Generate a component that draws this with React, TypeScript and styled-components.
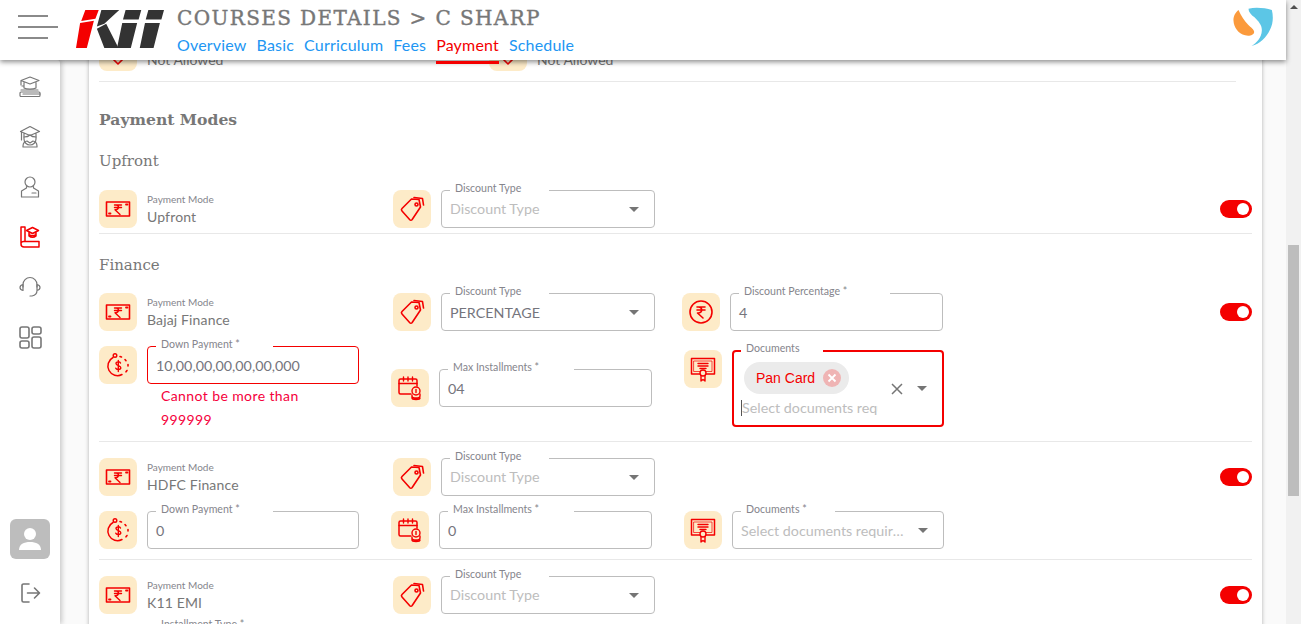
import { ReactNode } from 'react';
import styled, { createGlobalStyle } from 'styled-components';

const RED = '#f40000';
const GREY = '#777777';

const GlobalStyle = createGlobalStyle`
  html, body {
    margin: 0;
    padding: 0;
    height: 100%;
    overflow: hidden;
    background: #fafafa;
    font-family: 'Lato', 'Liberation Sans', sans-serif;
    color: ${GREY};
  }
  * { box-sizing: border-box; }
`;

const Shell = styled.div`
  display: flex;
  width: 1301px;
  height: 624px;
  overflow: hidden;
`;

const Column = styled.div`
  flex: 1;
  min-width: 0;
  display: flex;
  flex-direction: column;
`;

const Header = styled.header`
  position: relative;
  z-index: 3;
  flex: 0 0 60px;
  display: flex;
  align-items: flex-start;
  background: #fff;
  box-shadow: 0 2px 5px rgba(0, 0, 0, 0.45);
`;

const Burger = styled.div`
  flex: 0 0 52px;
  margin: 15px 0 0 18px;
  display: flex;
  flex-direction: column;
  gap: 9px;
`;

const BurgerLine = styled.span<{ $w: number }>`
  display: block;
  height: 2px;
  width: ${(p) => p.$w}px;
  background: #8a8a8a;
`;

const LogoBox = styled.svg`
  flex: 0 0 88px;
  margin: 10px 0 0 6px;
`;

const Heading = styled.div`
  margin-left: 13px;
  flex: 1;
`;

const PageTitle = styled.h1`
  margin: 6px 0 0;
  font-family: 'DejaVu Serif', serif;
  font-weight: 400;
  font-size: 20px;
  line-height: 24px;
  letter-spacing: 1.38px;
  -webkit-text-stroke: 0.4px ${GREY};
  color: ${GREY};
  white-space: nowrap;
`;

const Tabs = styled.nav`
  display: flex;
  gap: 10px;
  margin-top: 5px;
`;

const Tab = styled.a<{ $active?: boolean }>`
  position: relative;
  font-family: 'Lato', sans-serif;
  font-size: 16px;
  line-height: 20px;
  letter-spacing: 0.18px;
  color: ${(p) => (p.$active ? RED : '#2196f3')};
  &::after {
    content: '';
    display: ${(p) => (p.$active ? 'block' : 'none')};
    position: absolute;
    left: 0;
    right: 0;
    top: 26px;
    height: 3px;
    background: ${RED};
  }
`;

const Body = styled.div`
  flex: 1;
  min-height: 0;
  display: flex;
`;

const Sidebar = styled.aside`
  position: relative;
  z-index: 2;
  flex: 0 0 60px;
  display: flex;
  flex-direction: column;
  justify-content: space-between;
  align-items: center;
  padding: 2px 0 19px;
  background: #fff;
  box-shadow: 2px 0 5px rgba(0, 0, 0, 0.2);
  border-top-right-radius: 3px;
`;

const NavList = styled.div`
  display: flex;
  flex-direction: column;
  gap: 26px;
  padding-top: 13px;
`;

const NavIcon = styled.svg<{ $active?: boolean; $bold?: boolean }>`
  display: block;
  width: 24px;
  height: 24px;
  fill: none;
  stroke: ${(p) => (p.$active ? RED : GREY)};
  stroke-width: ${(p) => (p.$bold ? 1.6 : 1.2)};
  stroke-linejoin: round;
  stroke-linecap: round;
`;

const SideBottom = styled.div`
  display: flex;
  flex-direction: column;
  align-items: center;
  gap: 22px;
`;

const Avatar = styled.div`
  width: 40px;
  height: 40px;
  border-radius: 6px;
  background: #bdbdbd;
  display: flex;
  align-items: center;
  justify-content: center;
`;

const Main = styled.main`
  flex: 1;
  min-width: 0;
  padding: 0 24px 0 29px;
  background: #fafafa;
  overflow: hidden;
`;

const Card = styled.section`
  margin-top: -27px;
  padding: 0 10px;
  min-height: 700px;
  background: #fff;
  box-shadow: 0 0 4px rgba(0, 0, 0, 0.3);
`;

const TopRow = styled.div`
  display: flex;
  height: 49px;
  margin-right: 16px;
  padding-bottom: 10px;
  border-bottom: 1px solid #e8e8e8;
`;

const TopCell = styled.div`
  display: flex;
  gap: 10px;
  width: 390px;
`;

const TopValue = styled.span`
  margin-top: 18px;
  font-size: 14px;
  line-height: 17px;
`;

const SectionTitle = styled.h2`
  margin: 27px 0 0;
  font-family: 'DejaVu Serif', serif;
  font-size: 15.6px;
  line-height: 22px;
  font-weight: 700;
  color: ${GREY};
`;

const GroupTitle = styled.h3<{ $top: number }>`
  margin: ${(p) => p.$top}px 0 0;
  font-family: 'DejaVu Serif', serif;
  font-size: 15px;
  line-height: 20px;
  font-weight: 400;
  color: ${GREY};
`;

const FormRow = styled.div<{ $top: number; $pad?: number; $line?: boolean }>`
  display: grid;
  grid-template-columns: 294px 289px 1fr 32px;
  align-items: center;
  margin-top: ${(p) => p.$top}px;
  padding-bottom: ${(p) => p.$pad ?? 0}px;
  border-bottom: ${(p) => (p.$line ? '1px solid #e8e8e8' : 'none')};
`;

const Cell = styled.div<{ $shift?: number; $lift?: number }>`
  display: flex;
  align-items: flex-start;
  gap: 10px;
  margin-left: ${(p) => p.$shift ?? 0}px;
  margin-bottom: ${(p) => p.$lift ?? 0}px;
`;

const IconTile = styled.div`
  flex: 0 0 38px;
  width: 38px;
  height: 38px;
  border-radius: 8px;
  background: #fdebc8;
  display: flex;
  align-items: center;
  justify-content: center;
`;

const TileSvg = styled.svg`
  width: 26px;
  height: 26px;
  fill: none;
  stroke: ${RED};
  stroke-width: 1.4;
  stroke-linejoin: round;
  stroke-linecap: round;
`;

const Static = styled.div`
  padding-top: 3px;
`;

const StaticLabel = styled.div`
  font-size: 10px;
  line-height: 13px;
  color: #85858c;
`;

const StaticValue = styled.div`
  margin-top: 2px;
  font-size: 14px;
  line-height: 17px;
  letter-spacing: 0.15px;
`;

const Wrap = styled.div<{ $w: number }>`
  width: ${(p) => p.$w}px;
`;

const Box = styled.div<{ $error?: boolean; $thick?: boolean }>`
  position: relative;
  height: ${(p) => (p.$thick ? 77 : 38)}px;
  padding: 0 8px;
  display: flex;
  align-items: center;
  justify-content: space-between;
  border: ${(p) => (p.$thick ? 2 : 1)}px solid ${(p) => (p.$error ? RED : '#bdbdbd')};
  border-radius: 4px;
  background: #fff;
`;

const Legend = styled.span<{ $notch: number; $thick?: boolean }>`
  position: absolute;
  top: ${(p) => (p.$thick ? -10 : -9)}px;
  left: ${(p) => (p.$thick ? 7 : 8)}px;
  padding: 0 ${(p) => p.$notch}px 0 5px;
  background: #fff;
  font-size: 10.6px;
  line-height: 12px;
  white-space: nowrap;
  color: #85858c;
`;

const Value = styled.span<{ $placeholder?: boolean }>`
  padding-top: ${(p) => (p.$placeholder ? 0 : 1)}px;
  font-size: 14.3px;
  line-height: 18px;
  white-space: nowrap;
  color: ${(p) => (p.$placeholder ? '#bdbdbd' : '#75757d')};
`;

const Caret = styled.span`
  flex: 0 0 auto;
  margin-right: 7px;
  width: 0;
  height: 0;
  border-left: 5px solid transparent;
  border-right: 5px solid transparent;
  border-top: 5px solid #757575;
`;

const ErrorText = styled.div`
  margin: 0 10px 0 14px;
  font-size: 14px;
  line-height: 24px;
  letter-spacing: 0.4px;
  color: #f5003c;
`;

const Toggle = styled.div`
  width: 32px;
  height: 18px;
  border-radius: 9px;
  background: ${RED};
  display: flex;
  align-items: center;
  justify-content: flex-end;
  padding-right: 3px;
`;

const Knob = styled.span`
  width: 12px;
  height: 12px;
  border-radius: 50%;
  background: #fff;
`;

const MultiLeft = styled.div`
  width: 137px;
  align-self: stretch;
  padding-top: 10px;
  display: flex;
  flex-direction: column;
  align-items: flex-start;
  gap: 6px;
`;

const Chip = styled.div`
  height: 32px;
  margin-left: 2px;
  padding: 0 8px 0 12px;
  display: flex;
  align-items: center;
  gap: 8px;
  border-radius: 16px;
  background: #ebebeb;
  font-family: 'Liberation Sans', sans-serif;
  font-size: 14px;
  color: ${RED};
  white-space: nowrap;
`;

const ChipDelete = styled.span`
  width: 18px;
  height: 18px;
  border-radius: 50%;
  background: #efb4b4;
  display: flex;
  align-items: center;
  justify-content: center;
`;

const Typing = styled.div`
  width: 100%;
  overflow: hidden;
  border-left: 1px solid #555;
  margin-left: -1px;
  font-size: 14.3px;
  line-height: 16px;
  white-space: nowrap;
  color: #bdbdbd;
`;

const Ellipsis = styled.span`
  width: 163px;
  overflow: hidden;
  text-overflow: ellipsis;
  white-space: nowrap;
  font-size: 14.3px;
  color: #bdbdbd;
`;

const MultiActions = styled.div`
  display: flex;
  align-items: center;
  gap: 13px;
`;

const ClearIcon = styled.svg`
  width: 14px;
  height: 14px;
  stroke: #757575;
  stroke-width: 1.5;
  fill: none;
`;

const ScrollTrack = styled.div`
  flex: 0 0 15px;
  display: flex;
  flex-direction: column;
  align-items: center;
  background: #f1f1f1;
`;

const ScrollArrow = styled.span`
  margin-top: 5px;
  width: 0;
  height: 0;
  border-left: 4px solid transparent;
  border-right: 4px solid transparent;
  border-bottom: 4px solid #505050;
`;

const ScrollThumb = styled.div`
  margin-top: 236px;
  width: 11px;
  height: 251px;
  background: #bdbdbd;
`;

const RupeeNote = () => (
  <TileSvg viewBox="0 0 26 26">
    <rect x="1.500" y="6" width="23" height="14" strokeWidth="1.600" />
    <path d="M9.500 9h7M9.500 11.500h7M11 9c3 0 3.500 3.800 0 4.800h-1l5 4.700" />
    <path d="M4 17.500h1.500M21 8.500h1.500" strokeWidth="1.800" />
  </TileSvg>
);

const PriceTag = () => (
  <TileSvg viewBox="0 0 26 26" style={{ strokeWidth: 1.6 }}>
    <path d="M3 12.500 12.500 3l7.500.5 1.500 7.500L13 23.800a1.500 1.500 0 0 1-2.200 0L3 15a1.800 1.800 0 0 1 0-2.500z" />
    <path d="M15 1.500l8.500 1 1 6.500" />
    <circle cx="17.500" cy="8.500" r="1.500" />
  </TileSvg>
);

const RupeeCircle = () => (
  <TileSvg viewBox="0 0 26 26">
    <circle cx="13" cy="13" r="11" strokeWidth="1.600" />
    <path d="M9 8h8M9 11h8M10.500 8c4 0 4.500 5.500 0 6h-1l5.500 5" strokeWidth="1.600" />
  </TileSvg>
);

const DollarCycle = () => (
  <TileSvg viewBox="0 0 26 26">
    <path d="M8 5.500a9 9 0 1 0 9 17" strokeWidth="1.500" />
    <circle cx="10" cy="3.500" r="1.800" />
    <path d="M15 4.500l1.500.5M20 7.500l1 1.200M23 12.500v1.500M22 18.500l-1 1.300" strokeWidth="1.600" />
    <path d="M15.500 11c-.5-1.500-4.500-1.800-4.500.5s4.800 1.800 4.800 4.200-4.500 2.200-5 .5M13.300 8.500v11" />
  </TileSvg>
);

const CalendarCoin = () => (
  <TileSvg viewBox="0 0 26 26">
    <path d="M14 19H3.500A1.500 1.500 0 0 1 2 17.500V5.500A1.500 1.500 0 0 1 3.500 4h15A1.500 1.500 0 0 1 20 5.500V11" strokeWidth="1.500" />
    <path d="M2 8.500h18M6.500 2v4M11 2v4M15.500 2v4" />
    <circle cx="19" cy="16" r="4" />
    <path d="M15 21c0 1.500 1.500 2 4 2s4-.500 4-2v-2M15 20v3c0 1 2 1.500 4 1.500s4-.500 4-1.500" />
    <path d="M19 14.500v3" />
  </TileSvg>
);

const Certificate = () => (
  <TileSvg viewBox="0 0 26 26">
    <rect x="1.500" y="2.500" width="23" height="15.500" strokeWidth="1.500" />
    <path d="M4 5h18v10.500H4z" strokeWidth=".7" />
    <path d="M8 7.500h10M8 10h10M10 12.500h6" />
    <circle cx="13" cy="17" r="3" fill="#fdebc8" />
    <path d="M11 19.500V25l2-1.500 2 1.500v-5.500" />
  </TileSvg>
);

const ChevronStub = () => (
  <TileSvg viewBox="0 0 26 26">
    <path d="M7 19l6 6 6-6" strokeWidth="1.600" />
  </TileSvg>
);

const Logo = () => (
  <LogoBox width="88" height="38" viewBox="32 15 236 103" preserveAspectRatio="none">
    <path fill="#f40000" d="M57 15h36l-9 24-38 6zM43 50l37-6-19 74H32z" />
    <path fill="#333" d="M100 15h48l-40 37-20 8zM88 66l25-14 33 66h-38z" />
    <path fill="#333" d="M165 15h42l-7 26h-42zM156 50h40l-17 68h-37zM226 15h42l-7 26h-42zM217 50h40l-17 68h-37z" />
  </LogoBox>
);

const BrandMark = styled.svg`
  flex: 0 0 47px;
  margin: 5px 9px 0 0;
`;

const Brand = () => (
  <BrandMark width="47" height="45" viewBox="150 15 140 135">
    <path fill="#fb9a3c" d="M175 30c-10 8-16 20-15 32 1 20 14 38 35 44 12 3 26 0 27-10 0-8-10-14-18-22-12-12-21-26-29-44z" />
    <path fill="#5cc6e6" d="M205 26c22-5 50-2 70 4 5 20 4 42-6 60-10 22-30 42-55 48 16-10 30-26 31-46 1-16-10-28-22-40-10-8-18-16-18-26z" />
  </BrandMark>
);

const Field = ({
  label,
  notch,
  width = 214,
  error,
  children,
}: {
  label: string;
  notch: number;
  width?: number;
  error?: boolean;
  children: ReactNode;
}) => (
  <Wrap $w={width}>
    <Box $error={error}>
      <Legend $notch={notch}>{label}</Legend>
      {children}
    </Box>
  </Wrap>
);

const DiscountSelect = ({ value }: { value?: string }) => (
  <Cell>
    <IconTile>
      <PriceTag />
    </IconTile>
    <Field label="Discount Type" notch={28}>
      <Value $placeholder={!value}>{value ?? 'Discount Type'}</Value>
      <Caret />
    </Field>
  </Cell>
);

const ModeCell = ({ name }: { name: string }) => (
  <Cell>
    <IconTile>
      <RupeeNote />
    </IconTile>
    <Static>
      <StaticLabel>Payment Mode</StaticLabel>
      <StaticValue>{name}</StaticValue>
    </Static>
  </Cell>
);

const SideNav = () => (
  <Sidebar>
    <NavList>
      <NavIcon viewBox="0 0 24 24">
        <path d="M12 2 3 5.500l9 3.500 9-3.500zM6 7.500v5.500c3 1.500 9 1.500 12 0V7.500M3 5.500V10M6 11H4" />
        <rect x="2" y="17" width="20" height="4.500" rx="1" />
        <path d="M5 19h17M3 15h17" />
      </NavIcon>
      <NavIcon viewBox="0 0 24 24">
        <path d="M12 1.500 2.500 6.500l9.500 4 9.500-4zM6 8.500V14a6 6 0 0 0 12 0V8.500" />
        <path d="M6 12c3 0 5-1 6-2 1 1 3 2 6 2M5 21c0-3 2-5 4-5l3 2 3-2c2 0 4 2 4 5v1H5zM3.500 7v8" />
      </NavIcon>
      <NavIcon viewBox="0 0 24 24">
        <circle cx="12" cy="7" r="5" />
        <path d="M8.500 11.500v1.500l-5 3v6h17v-6l-5-3v-1.500M14 18h4" />
      </NavIcon>
      <NavIcon viewBox="0 0 24 24" $active>
        <path d="M3 2v17a3 3 0 0 0 3 3h15M3 19a2.500 2.500 0 0 1 3-2.500h15v5M3 2h4v14.500" strokeWidth="1.500" />
        <path d="M14.500 2.500 8.500 5.500l6 3 6-3zM11 7.500v3.500c2 1.800 5 1.800 7 0V7.500M11.500 10c2 1 4 1 6 0" strokeWidth="1.500" />
      </NavIcon>
      <NavIcon viewBox="0 0 24 24">
        <path d="M5 12V9.500a7 7 0 0 1 14 0V12" />
        <path d="M5 9.500c-2 .5-3 1.500-3 3s1 2.500 3 3zM19 9.500c2 .5 3 1.500 3 3s-1 2.500-3 3zM19 15.500c0 3-2 5-5 5.500h-2" />
      </NavIcon>
      <NavIcon viewBox="0 0 24 24" $bold>
        <rect x="2" y="2" width="9" height="11" rx="2" />
        <rect x="14" y="2" width="9" height="7" rx="2" />
        <rect x="2" y="16" width="9" height="7" rx="2" />
        <rect x="14" y="12" width="9" height="11" rx="2" />
      </NavIcon>
    </NavList>
    <SideBottom>
      <Avatar>
        <svg width="24" height="26" viewBox="0 0 24 26" fill="#fff">
          <circle cx="12" cy="8" r="6" />
          <path d="M1 24c0-6 5-8 11-8s11 2 11 8z" />
        </svg>
      </Avatar>
      <NavIcon viewBox="0 0 24 24" $bold>
        <path d="M11 3H5.500A1.500 1.500 0 0 0 4 4.500v15A1.500 1.500 0 0 0 5.500 21H11M9.500 12H21M16.500 7l5 5-5 5" />
      </NavIcon>
    </SideBottom>
  </Sidebar>
);

export default function App() {
  return (
    <Shell>
      <GlobalStyle />
      <Column>
        <Header>
          <Burger>
            <BurgerLine $w={30} />
            <BurgerLine $w={40} />
            <BurgerLine $w={30} />
          </Burger>
          <Logo />
          <Heading>
            <PageTitle>COURSES DETAILS &gt; C SHARP</PageTitle>
            <Tabs>
              <Tab>Overview</Tab>
              <Tab>Basic</Tab>
              <Tab>Curriculum</Tab>
              <Tab>Fees</Tab>
              <Tab $active>Payment</Tab>
              <Tab>Schedule</Tab>
            </Tabs>
          </Heading>
          <Brand />
        </Header>
        <Body>
          <SideNav />
          <Main>
            <Card>
              <TopRow>
                <TopCell>
                  <IconTile>
                    <ChevronStub />
                  </IconTile>
                  <TopValue>Not Allowed</TopValue>
                </TopCell>
                <TopCell>
                  <IconTile>
                    <ChevronStub />
                  </IconTile>
                  <TopValue>Not Allowed</TopValue>
                </TopCell>
              </TopRow>

              <SectionTitle>Payment Modes</SectionTitle>

              <GroupTitle $top={20}>Upfront</GroupTitle>
              <FormRow $top={19} $pad={5} $line>
                <ModeCell name="Upfront" />
                <DiscountSelect />
                <span />
                <Toggle>
                  <Knob />
                </Toggle>
              </FormRow>

              <GroupTitle $top={21}>Finance</GroupTitle>
              <FormRow $top={18}>
                <ModeCell name="Bajaj Finance" />
                <DiscountSelect value="PERCENTAGE" />
                <Cell>
                  <IconTile>
                    <RupeeCircle />
                  </IconTile>
                  <Field label="Discount Percentage *" notch={43} width={213}>
                    <Value>4</Value>
                  </Field>
                </Cell>
                <Toggle>
                  <Knob />
                </Toggle>
              </FormRow>
              <FormRow $top={15} $pad={9} $line>
                <Cell>
                  <IconTile>
                    <DollarCycle />
                  </IconTile>
                  <Wrap $w={212}>
                    <Box $error>
                      <Legend $notch={33}>Down Payment *</Legend>
                      <Value>10,00,00,00,00,00,000</Value>
                    </Box>
                    <ErrorText>Cannot be more than 999999</ErrorText>
                  </Wrap>
                </Cell>
                <Cell $shift={-2} $lift={2}>
                  <IconTile>
                    <CalendarCoin />
                  </IconTile>
                  <Field label="Max Installments *" notch={35} width={213}>
                    <Value>04</Value>
                  </Field>
                </Cell>
                <Cell $shift={2} $lift={1}>
                  <IconTile>
                    <Certificate />
                  </IconTile>
                  <Wrap $w={212}>
                    <Box $error $thick>
                      <Legend $notch={24} $thick>
                        Documents
                      </Legend>
                      <MultiLeft>
                        <Chip>
                          Pan Card
                          <ChipDelete>
                            <svg width="10" height="10" viewBox="0 0 10 10" stroke="#fff" strokeWidth="1.800">
                              <path d="M1.500 1.500l7 7M8.500 1.500l-7 7" />
                            </svg>
                          </ChipDelete>
                        </Chip>
                        <Typing>Select documents required</Typing>
                      </MultiLeft>
                      <MultiActions>
                        <ClearIcon viewBox="0 0 14 14">
                          <path d="M2 2l10 10M12 2 2 12" />
                        </ClearIcon>
                        <Caret />
                      </MultiActions>
                    </Box>
                  </Wrap>
                </Cell>
                <span />
              </FormRow>

              <FormRow $top={16}>
                <ModeCell name="HDFC Finance" />
                <DiscountSelect />
                <span />
                <Toggle>
                  <Knob />
                </Toggle>
              </FormRow>
              <FormRow $top={15} $pad={10} $line>
                <Cell>
                  <IconTile>
                    <DollarCycle />
                  </IconTile>
                  <Field label="Down Payment *" notch={33} width={212}>
                    <Value>0</Value>
                  </Field>
                </Cell>
                <Cell $shift={-2}>
                  <IconTile>
                    <CalendarCoin />
                  </IconTile>
                  <Field label="Max Installments *" notch={35} width={213}>
                    <Value>0</Value>
                  </Field>
                </Cell>
                <Cell $shift={2}>
                  <IconTile>
                    <Certificate />
                  </IconTile>
                  <Field label="Documents *" notch={28} width={212}>
                    <Ellipsis>Select documents required</Ellipsis>
                    <Caret />
                  </Field>
                </Cell>
                <span />
              </FormRow>

              <FormRow $top={16}>
                <ModeCell name="K11 EMI" />
                <DiscountSelect />
                <span />
                <Toggle>
                  <Knob />
                </Toggle>
              </FormRow>
              <FormRow $top={12}>
                <Cell>
                  <IconTile />
                  <Field label="Installment Type *" notch={30} width={212}>
                    <Value $placeholder>Installment Type</Value>
                  </Field>
                </Cell>
              </FormRow>
            </Card>
          </Main>
        </Body>
      </Column>
      <ScrollTrack>
        <ScrollArrow />
        <ScrollThumb />
      </ScrollTrack>
    </Shell>
  );
}
